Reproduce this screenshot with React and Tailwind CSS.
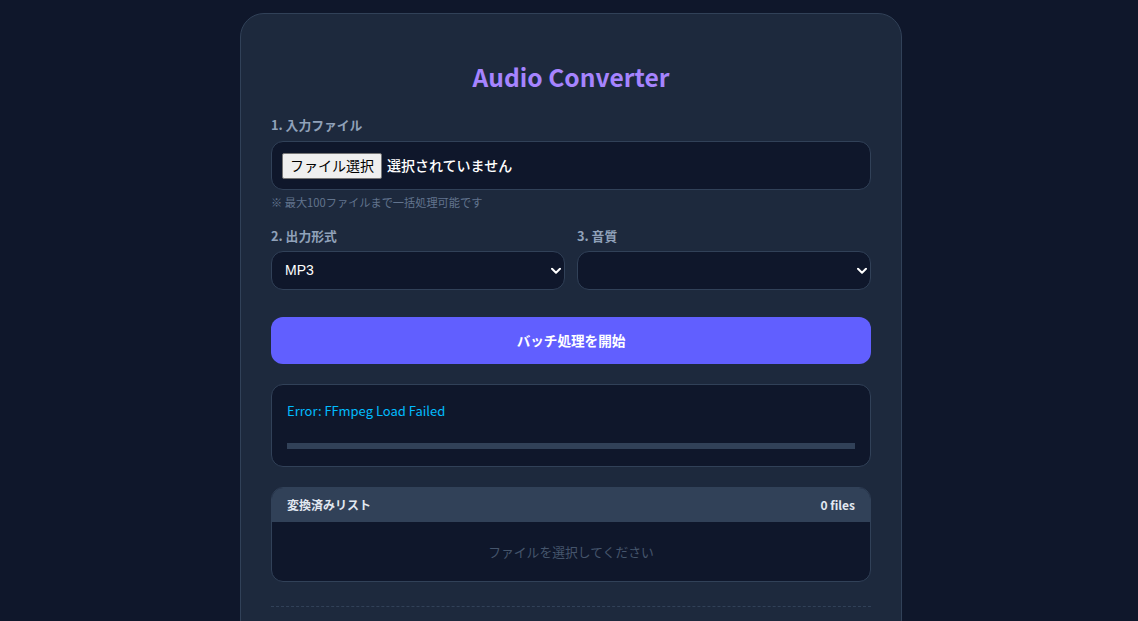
import { useState } from "react";

export default function App() {

  const [format, setFormat] = useState("mp3");

  return (
    <div className="h-screen overflow-hidden bg-slate-900 pl-[4px] font-['Noto_Sans_CJK_JP',sans-serif]">

      <div className="mx-auto mt-[13px] w-[662px] rounded-[24px] border border-slate-700 bg-slate-800 px-[30px] pt-[44px] pb-24">

        <h1 className="text-center text-[24.6px] font-bold leading-[36px] text-violet-400">
          Audio Converter
        </h1>

        {/* 1. input */}
        <Label className="mt-[21px]">1. 入力ファイル</Label>

        <div className="mt-[6px] flex h-[49px] items-center rounded-xl border border-slate-700 bg-slate-900 px-[10px] pt-[1px]">
          <label className="flex h-[26px] items-center rounded-[2px] border border-[#767676] bg-[#efefef] px-[7px] text-[14px] text-black font-['Liberation_Sans','Noto_Sans_CJK_JP',sans-serif]">
            ファイル選択
          </label>
          <span className="ml-[5px] text-[14px] font-medium text-white font-['Liberation_Sans','Noto_Sans_CJK_JP',sans-serif]">
            選択されていません
          </span>
        </div>

        <p className="mt-[4px] text-[11.2px] leading-[16px] text-slate-500">
          ※ 最大100ファイルまで一括処理可能です
        </p>

        {/* 2 / 3 */}
        <div className="mt-[16px] grid grid-cols-2 gap-3">

          <div>
            <Label>2. 出力形式</Label>
            <Select value={format} onChange={setFormat} options={[["mp3", "MP3"], ["wav", "WAV"], ["aac", "AAC"]]} />
          </div>

          <div>
            <Label>3. 音質</Label>
            <Select value="" onChange={() => {}} options={[["", ""]]} />
          </div>

        </div>

        <button className="mt-[27px] flex h-[47px] w-full items-center justify-center rounded-xl bg-indigo-500 text-[13.6px] font-bold text-white">
          バッチ処理を開始
        </button>

        {/* status */}
        <div className="mt-[20px] rounded-xl border border-slate-700 bg-slate-900 px-[15px] pt-[16px] pb-[17px]">
          <p className="text-[13px] leading-[20px] text-sky-400">
            Error: FFmpeg Load Failed
          </p>
          <div className="mt-[22px] h-[6px] w-full bg-slate-700" />
        </div>

        {/* list */}
        <div className="mt-[20px] overflow-hidden rounded-xl border border-slate-700 bg-slate-900">
          <div className="flex h-[34px] items-center justify-between bg-slate-700 px-[15px] text-[12px] font-bold text-slate-200">
            <span>変換済みリスト</span>
            <span>0 files</span>
          </div>
          <div className="flex h-[59px] items-center justify-center text-[12.8px] text-slate-600">
            ファイルを選択してください
          </div>
        </div>

        <div className="mt-[24px] border-t border-dashed border-slate-700" />

      </div>

    </div>
  );

}


/* LABEL */

function Label({ children, className = "" }) {

  return (
    <p className={`text-[12.8px] font-bold leading-[20px] text-slate-400 ${className}`}>
      {children}
    </p>
  );

}


/* SELECT */

function Select({ value, onChange, options }) {

  return (
    <div className="relative mt-[5px]">

      <select
        value={value}
        onChange={(e) => onChange(e.target.value)}
        className="h-[39px] w-full appearance-none rounded-xl border border-slate-700 bg-slate-900 pl-[13px] text-[14px] text-white outline-none font-['Liberation_Sans','Noto_Sans_CJK_JP',sans-serif]"
      >
        {options.map(([v, l]) => (
          <option key={v} value={v}>{l}</option>
        ))}
      </select>

      <svg
        className="pointer-events-none absolute right-[4px] top-1/2 -translate-y-1/2"
        width="10"
        height="7"
        viewBox="0 0 10 7"
        fill="none"
      >
        <path d="M1 1.2 L5 5.2 L9 1.2" stroke="white" strokeWidth="2" strokeLinecap="round" strokeLinejoin="round" />
      </svg>

    </div>
  );

}
